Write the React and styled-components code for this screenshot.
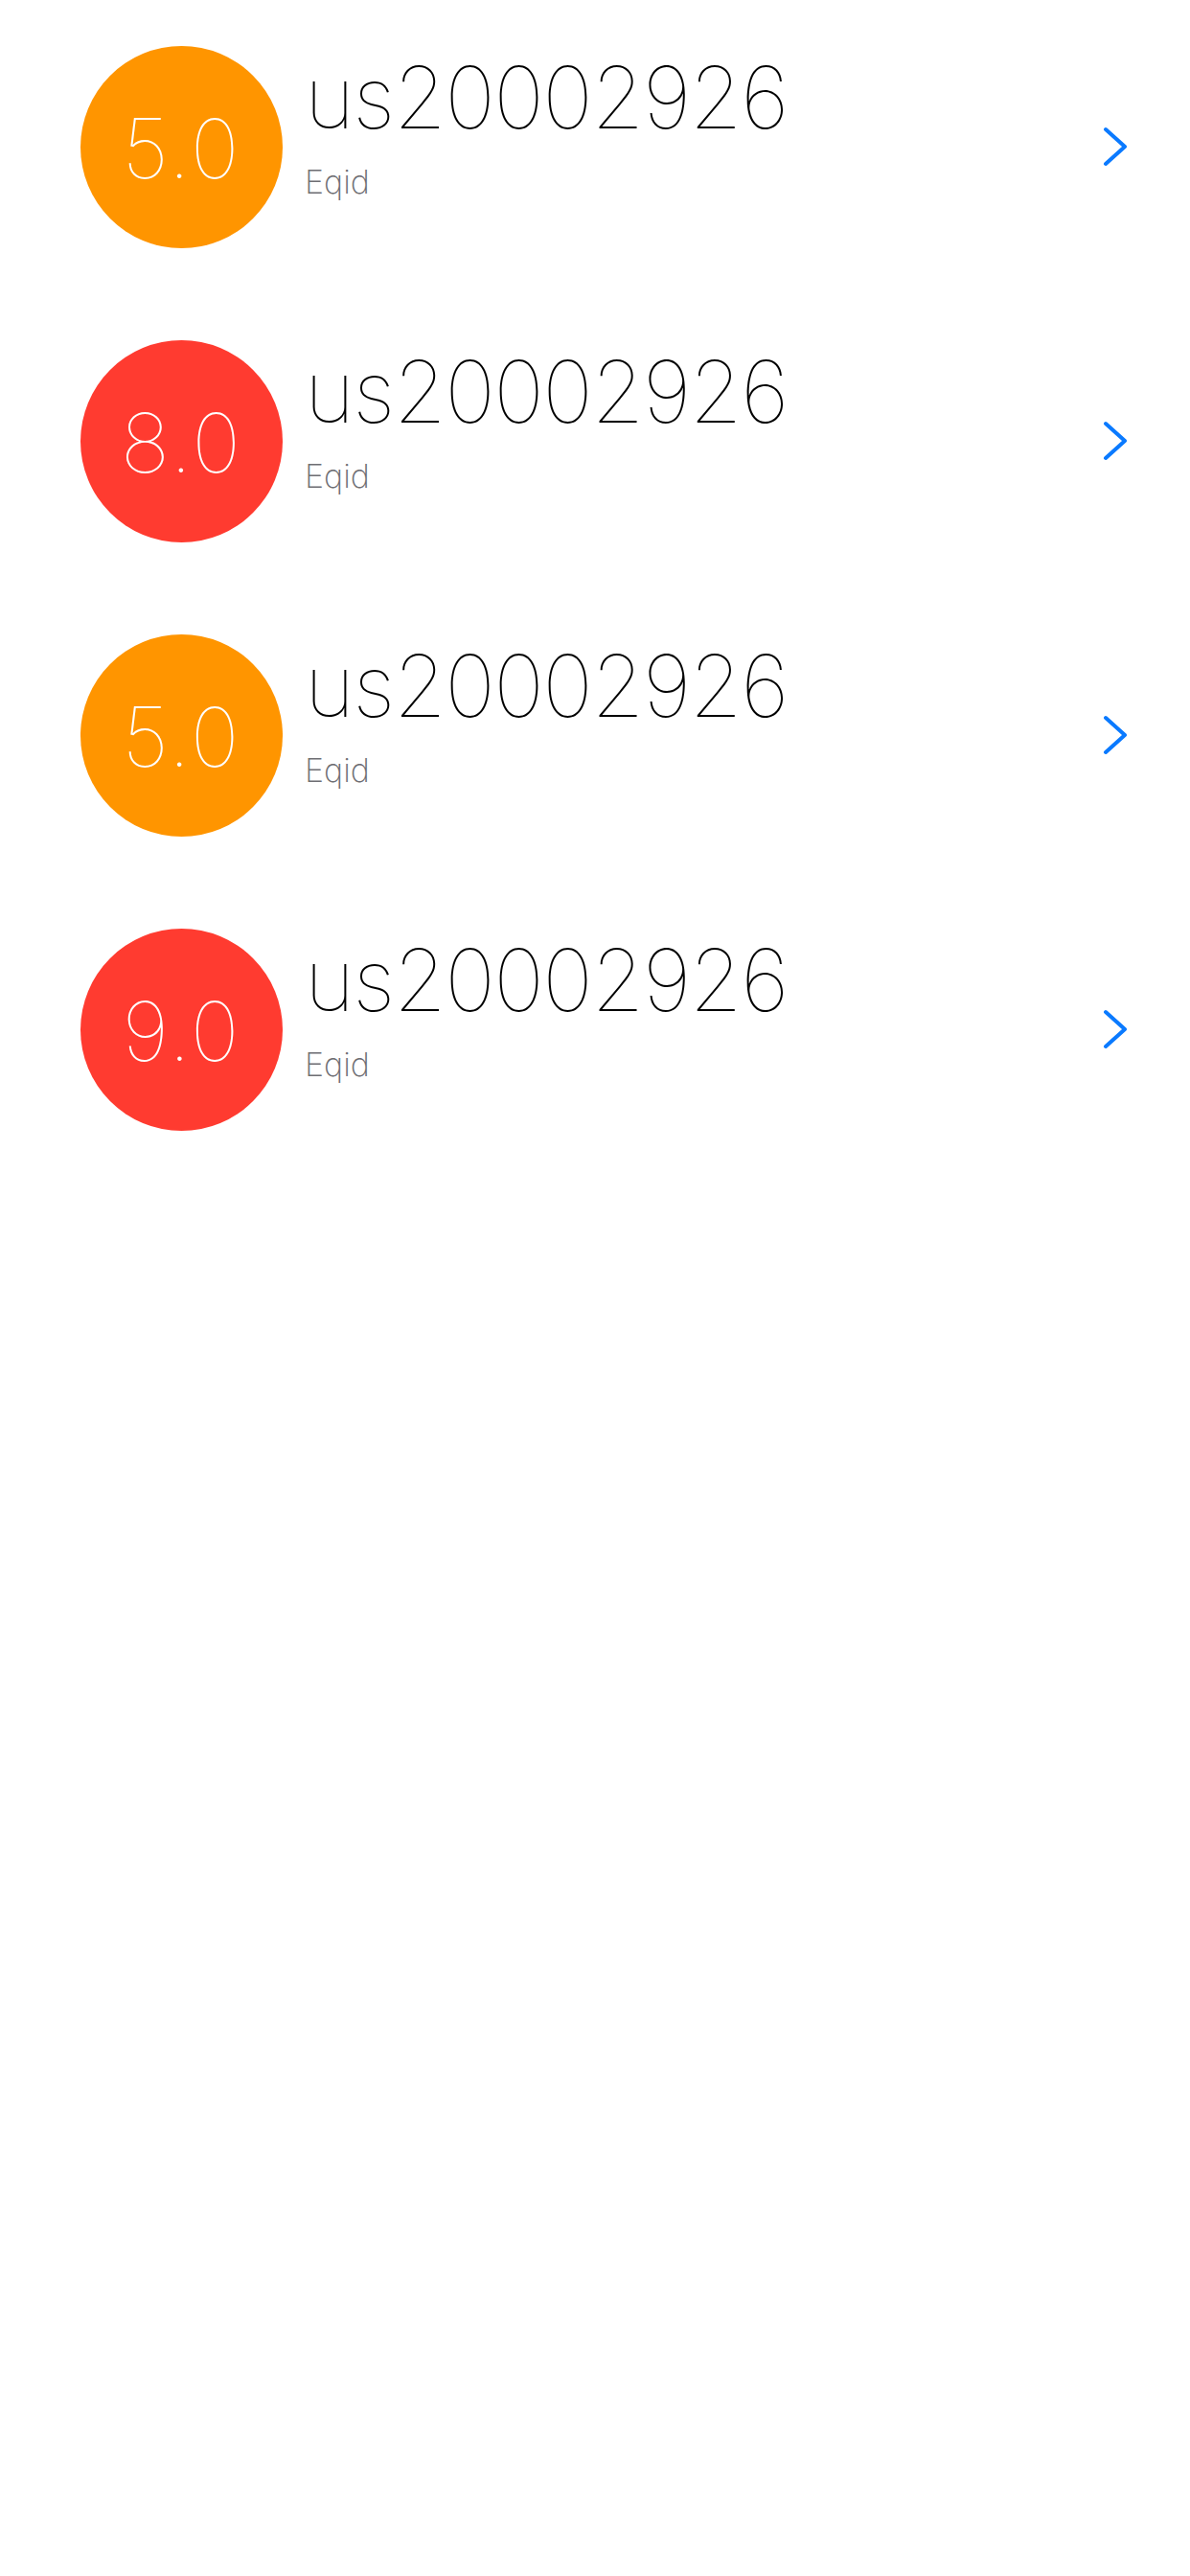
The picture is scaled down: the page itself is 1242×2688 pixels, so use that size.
import styled, { createGlobalStyle } from "styled-components";

const GlobalStyle = createGlobalStyle`
  html, body {
    margin: 0;
    padding: 0;
    background: #ffffff;
  }
  body {
    font-family: "Inter", "Noto Sans", sans-serif;
  }
`;

const items = [
  { score: "5.0", level: "warn", id: "us20002926", label: "Eqid" },
  { score: "8.0", level: "danger", id: "us20002926", label: "Eqid" },
  { score: "5.0", level: "warn", id: "us20002926", label: "Eqid" },
  { score: "9.0", level: "danger", id: "us20002926", label: "Eqid" },
];

function App() {
  return (
    <>
      <GlobalStyle />
      <Page>
        <List>
          {items.map((item, i) => (
            <Row key={i}>
              <Badge $level={item.level}>
                <Score>{item.score}</Score>
              </Badge>
              <TextBlock>
                <Title>{item.id}</Title>
                <Subtitle>{item.label}</Subtitle>
              </TextBlock>
              <Chevron />
            </Row>
          ))}
        </List>
      </Page>
    </>
  );
}

function Chevron() {
  return (
    <ChevronWrap>
      <svg width="25" height="42" viewBox="0 0 25 42" fill="none">
        <polyline
          points="3,3 23,21 3,39"
          stroke="#0a7aff"
          strokeWidth="4"
          strokeLinecap="round"
          strokeLinejoin="round"
        />
      </svg>
    </ChevronWrap>
  );
}

const Page = styled.div`
  width: 1242px;
  min-height: 2688px;
  background: #ffffff;
`;

const List = styled.ul`
  list-style: none;
  margin: 0;
  padding: 0;
`;

const Row = styled.li`
  display: flex;
  align-items: center;
  height: 307px;
  padding: 0 66px 0 84px;
  box-sizing: border-box;
`;

const Badge = styled.div`
  flex: none;
  width: 211px;
  height: 211px;
  border-radius: 50%;
  background: ${(p) => (p.$level === "danger" ? "#ff3b30" : "#ff9500")};
  display: flex;
  align-items: center;
  justify-content: center;
`;

const Score = styled.span`
  color: #ffffff;
  font-size: 86px;
  font-weight: 100;
  line-height: 1;
  letter-spacing: 2px;
  padding-top: 2px;
`;

const TextBlock = styled.div`
  flex: 1;
  align-self: flex-start;
  padding-top: 52px;
  margin-left: 23px;
  display: flex;
  flex-direction: column;
`;

const Title = styled.div`
  font-size: 89px;
  line-height: 100px;
  font-weight: 100;
  letter-spacing: -1.6px;
  color: #000000;
`;

const Subtitle = styled.div`
  margin-top: 18px;
  font-size: 34px;
  line-height: 40px;
  font-weight: 200;
  color: #6e6e73;
`;

const ChevronWrap = styled.div`
  flex: none;
  display: flex;
  width: 25px;
  height: 42px;
  margin-top: -2px;
`;

export default App;
